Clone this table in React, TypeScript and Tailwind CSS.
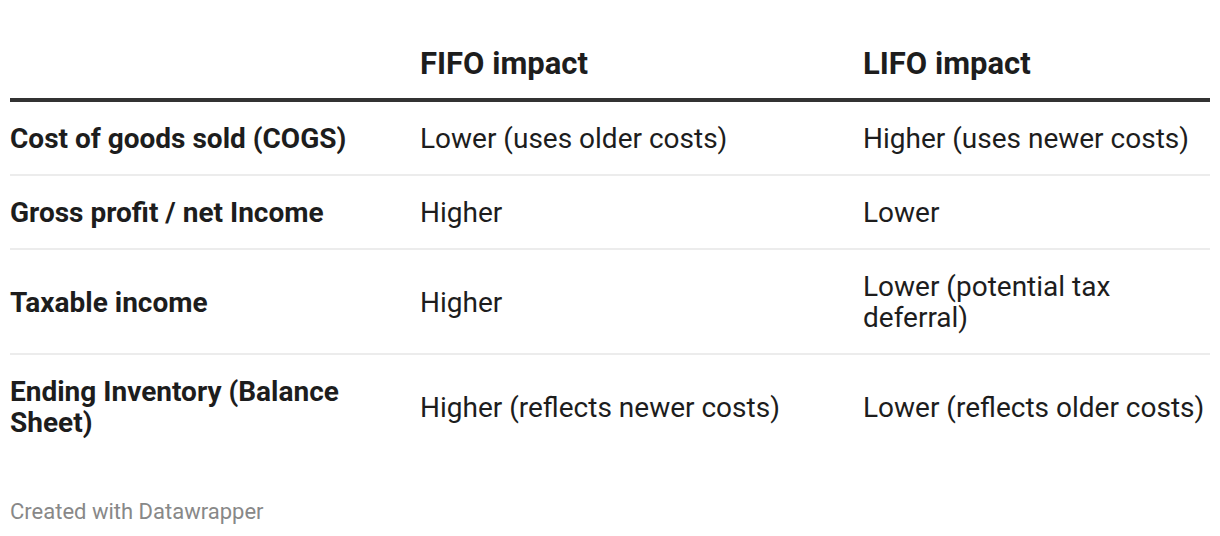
import React from "react";

interface Row {
  label: React.ReactNode;
  fifo: React.ReactNode;
  lifo: React.ReactNode;
}

const rows: Row[] = [
  { label: "Cost of goods sold (COGS)", fifo: "Lower (uses older costs)", lifo: "Higher (uses newer costs)" },
  { label: "Gross profit / net Income", fifo: "Higher", lifo: "Lower" },
  {
    label: "Taxable income",
    fifo: "Higher",
    lifo: (
      <>
        Lower (potential tax
        <br />
        deferral)
      </>
    ),
  },
  {
    label: (
      <>
        Ending Inventory (Balance
        <br />
        Sheet)
      </>
    ),
    fifo: "Higher (reflects newer costs)",
    lifo: "Lower (reflects older costs)",
  },
];

export default function App() {
  return (
    <div
      className="w-[1220px] h-[536px] bg-white px-[10px] text-[#1d1d1d]"
      style={{ fontFamily: "Roboto, 'Liberation Sans', sans-serif" }}
    >
      {/* header */}
      <div className="flex items-end border-b-4 border-[#333333] pt-[48px] pb-[19px] text-[31px] leading-[31px] font-bold">
        <div className="w-[410px]"></div>
        <div className="w-[443px]">FIFO impact</div>
        <div className="flex-1">LIFO impact</div>
      </div>

      {rows.map((r, i) => (
        <div
          key={i}
          className={
            "flex items-center pt-[21px] pb-[20px] text-[28px] leading-[31px] " +
            (i < rows.length - 1 ? "border-b-2 border-[#ececec]" : "")
          }
        >
          <div className="w-[410px] font-bold">{r.label}</div>
          <div className="w-[443px]">{r.fifo}</div>
          <div className="flex-1">{r.lifo}</div>
        </div>
      ))}

      <div className="mt-[42px] text-[22px] leading-[24px] text-[#888888]">Created with Datawrapper</div>
    </div>
  );
}
